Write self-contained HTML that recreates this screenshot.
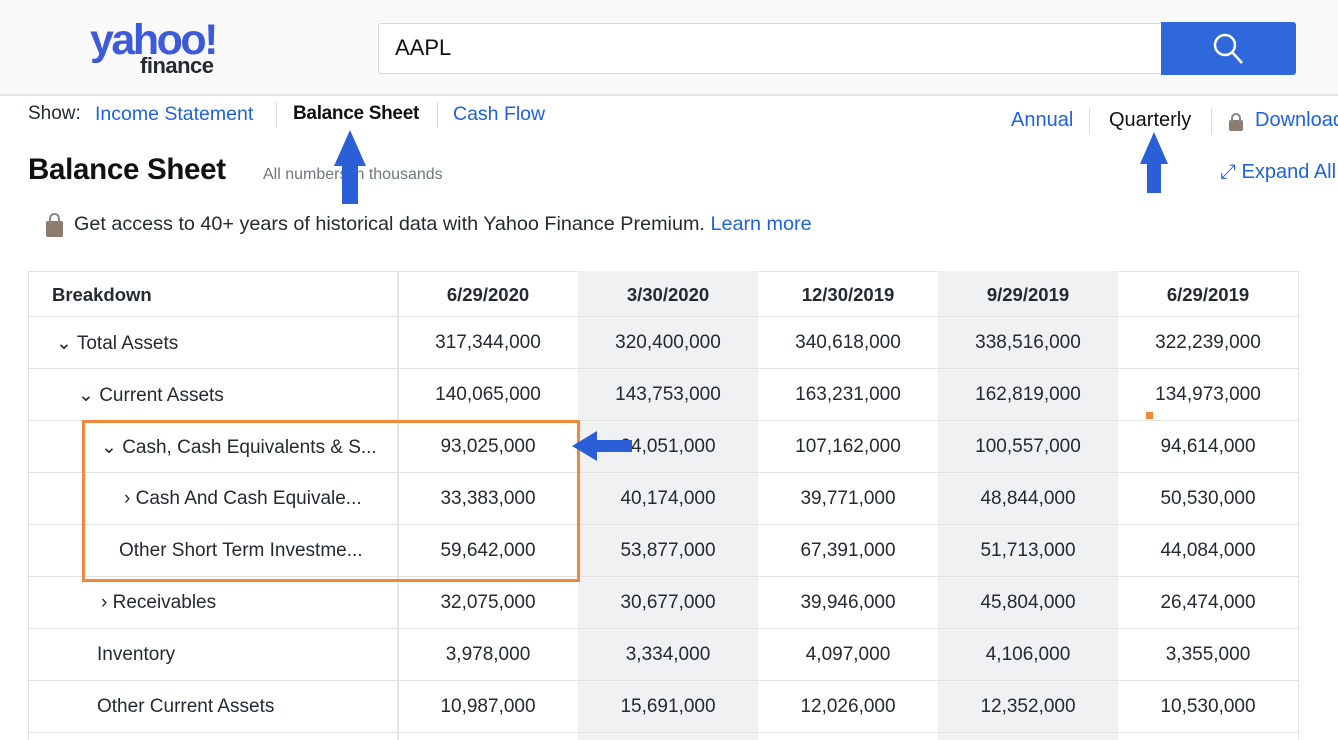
<!DOCTYPE html>
<html><head><meta charset="utf-8"><style>
*{margin:0;padding:0;box-sizing:border-box}
body{width:1338px;height:740px;overflow:hidden;background:#fff;font-family:"Liberation Sans",sans-serif;color:#232a31;position:relative}
.a{position:absolute;white-space:nowrap}
.hdr{position:absolute;left:0;top:0;width:1338px;height:96px;background:#f9f9f9;border-bottom:2px solid #e6e6e6}
.blue{color:#1d62de}
.col{position:absolute;top:271px;width:180px;height:469px}
.cell{position:absolute;font-size:19px;text-align:center;width:180px}
.lab{position:absolute;font-size:19px}
.hl{position:absolute;left:28px;width:1271px;height:1px;background:#e2e2e2}
</style></head><body>
<div class="hdr"></div>
<div class="a" style="left:90px;top:18px;font-size:43px;font-weight:bold;color:#3d5bd9;letter-spacing:-2.5px;line-height:44px">yahoo!</div>
<div class="a" style="left:140px;top:53px;font-size:22px;font-weight:bold;color:#232a31;letter-spacing:-0.5px">finance</div>
<div class="a" style="left:378px;top:23px;width:784px;height:51px;background:#fff;border:1px solid #d8d8d8;border-radius:3px 0 0 3px"></div>
<div class="a" style="left:395px;top:35px;font-size:22px;color:#111">AAPL</div>
<div class="a" style="left:1161px;top:22px;width:135px;height:53px;background:#2e68da;border-radius:0 3px 3px 0"></div>
<svg class="a" style="left:1208px;top:30px" width="40" height="36"><circle cx="17" cy="15" r="10" fill="none" stroke="#fff" stroke-width="2.5"/><line x1="24" y1="22" x2="34" y2="33" stroke="#fff" stroke-width="2.5"/></svg>

<div class="a" style="left:28px;top:103px;font-size:19px">Show:</div>
<div class="a blue" style="left:95px;top:103px;font-size:19.5px">Income Statement</div>
<div class="a" style="left:276px;top:102px;width:1px;height:26px;background:#ddd"></div>
<div class="a" style="left:293px;top:103px;font-size:19px;font-weight:bold;color:#111;letter-spacing:-0.3px">Balance Sheet</div>
<div class="a" style="left:437px;top:102px;width:1px;height:26px;background:#ddd"></div>
<div class="a blue" style="left:453px;top:103px;font-size:19.5px">Cash Flow</div>
<div class="a blue" style="left:1011px;top:109px;font-size:20px">Annual</div>
<div class="a" style="left:1089px;top:108px;width:1px;height:26px;background:#ddd"></div>
<div class="a" style="left:1109px;top:109px;font-size:20px;color:#111">Quarterly</div>
<div class="a" style="left:1211px;top:108px;width:1px;height:26px;background:#ddd"></div>
<div class="a" style="left:1229px;top:120px;width:14px;height:11px;background:#8d7b6e;border-radius:2px"></div>
<div class="a" style="left:1231px;top:113px;width:10px;height:10px;border:2px solid #888;border-bottom:none;border-radius:5px 5px 0 0"></div>
<div class="a blue" style="left:1255px;top:109px;font-size:20px">Download</div>
<div class="a" style="left:28px;top:153px;font-size:29.5px;font-weight:bold;color:#111;letter-spacing:-0.3px">Balance Sheet</div>
<div class="a" style="left:263px;top:166px;font-size:16px;color:#6e7780">All numbers in thousands</div>
<div class="a blue" style="left:1220px;top:161px;font-size:20px">⤢ Expand All</div>
<div class="a" style="left:46px;top:221px;width:17px;height:16px;background:#8d7b6e;border-radius:2px"></div>
<div class="a" style="left:49px;top:213px;width:11px;height:11px;border:2px solid #888;border-bottom:none;border-radius:6px 6px 0 0"></div>
<div class="a" style="left:74px;top:213px;font-size:19.8px;color:#232a31">Get access to 40+ years of historical data with Yahoo Finance Premium. <span class="blue">Learn more</span></div>

<svg class="a" style="left:330px;top:128px" width="40" height="78"><polygon points="20,2 36,38 28,38 28,76 12,76 12,38 4,38" fill="#2b5fd8"/></svg>
<svg class="a" style="left:1136px;top:130px" width="36" height="64"><polygon points="18,2 32,34 25,34 25,63 11,63 11,34 4,34" fill="#2b5fd8"/></svg>

<div class="a" style="left:28px;top:271px;width:1271px;height:469px;border:1px solid #e2e2e2;border-bottom:none"></div>
<div class="col" style="left:578px;background:#f0f1f3"></div>
<div class="col" style="left:938px;background:#f0f1f3"></div>
<div class="a" style="left:397px;top:271px;width:2px;height:469px;background:#e4e4e4"></div>
<div class="hl" style="top:316px"></div><div class="hl" style="top:368px"></div><div class="hl" style="top:420px"></div><div class="hl" style="top:472px"></div><div class="hl" style="top:524px"></div><div class="hl" style="top:576px"></div><div class="hl" style="top:628px"></div><div class="hl" style="top:680px"></div><div class="hl" style="top:732px"></div>

<div class="lab" style="left:52px;top:284px;font-weight:bold;font-size:18.5px">Breakdown</div>
<div class="lab" style="left:56px;top:332px">⌄ Total Assets</div>
<div class="lab" style="left:78px;top:384px">⌄ Current Assets</div>
<div class="lab" style="left:101px;top:436px">⌄ Cash, Cash Equivalents &amp; S...</div>
<div class="lab" style="left:124px;top:488px">› Cash And Cash Equivale...</div>
<div class="lab" style="left:119px;top:540px">Other Short Term Investme...</div>
<div class="lab" style="left:101px;top:592px">› Receivables</div>
<div class="lab" style="left:97px;top:644px">Inventory</div>
<div class="lab" style="left:97px;top:696px">Other Current Assets</div>

<div style="position:absolute;left:398px;top:0">
<div class="cell" style="left:0;top:284px;font-weight:bold;font-size:18.5px">6/29/2020</div>
<div class="cell" style="left:180px;top:284px;font-weight:bold;font-size:18.5px">3/30/2020</div>
<div class="cell" style="left:360px;top:284px;font-weight:bold;font-size:18.5px">12/30/2019</div>
<div class="cell" style="left:540px;top:284px;font-weight:bold;font-size:18.5px">9/29/2019</div>
<div class="cell" style="left:720px;top:284px;font-weight:bold;font-size:18.5px">6/29/2019</div>

<div class="cell" style="left:0;top:332px">317,344,000</div><div class="cell" style="left:180px;top:332px">320,400,000</div><div class="cell" style="left:360px;top:332px">340,618,000</div><div class="cell" style="left:540px;top:332px">338,516,000</div><div class="cell" style="left:720px;top:332px">322,239,000</div>
<div class="cell" style="left:0;top:384px">140,065,000</div><div class="cell" style="left:180px;top:384px">143,753,000</div><div class="cell" style="left:360px;top:384px">163,231,000</div><div class="cell" style="left:540px;top:384px">162,819,000</div><div class="cell" style="left:720px;top:384px">134,973,000</div>
<div class="cell" style="left:0;top:436px">93,025,000</div><div class="cell" style="left:180px;top:436px">94,051,000</div><div class="cell" style="left:360px;top:436px">107,162,000</div><div class="cell" style="left:540px;top:436px">100,557,000</div><div class="cell" style="left:720px;top:436px">94,614,000</div>
<div class="cell" style="left:0;top:488px">33,383,000</div><div class="cell" style="left:180px;top:488px">40,174,000</div><div class="cell" style="left:360px;top:488px">39,771,000</div><div class="cell" style="left:540px;top:488px">48,844,000</div><div class="cell" style="left:720px;top:488px">50,530,000</div>
<div class="cell" style="left:0;top:540px">59,642,000</div><div class="cell" style="left:180px;top:540px">53,877,000</div><div class="cell" style="left:360px;top:540px">67,391,000</div><div class="cell" style="left:540px;top:540px">51,713,000</div><div class="cell" style="left:720px;top:540px">44,084,000</div>
<div class="cell" style="left:0;top:592px">32,075,000</div><div class="cell" style="left:180px;top:592px">30,677,000</div><div class="cell" style="left:360px;top:592px">39,946,000</div><div class="cell" style="left:540px;top:592px">45,804,000</div><div class="cell" style="left:720px;top:592px">26,474,000</div>
<div class="cell" style="left:0;top:644px">3,978,000</div><div class="cell" style="left:180px;top:644px">3,334,000</div><div class="cell" style="left:360px;top:644px">4,097,000</div><div class="cell" style="left:540px;top:644px">4,106,000</div><div class="cell" style="left:720px;top:644px">3,355,000</div>
<div class="cell" style="left:0;top:696px">10,987,000</div><div class="cell" style="left:180px;top:696px">15,691,000</div><div class="cell" style="left:360px;top:696px">12,026,000</div><div class="cell" style="left:540px;top:696px">12,352,000</div><div class="cell" style="left:720px;top:696px">10,530,000</div>
</div>

<div class="a" style="left:82px;top:420px;width:498px;height:162px;border:3px solid #f0873a"></div>
<div class="a" style="left:1146px;top:412px;width:7px;height:7px;background:#f0873a"></div>
<svg class="a" style="left:570px;top:428px" width="64" height="36"><polygon points="2,18 27,3 27,12 62,12 62,24 27,24 27,33" fill="#2b5fd8"/></svg>
</body></html>
